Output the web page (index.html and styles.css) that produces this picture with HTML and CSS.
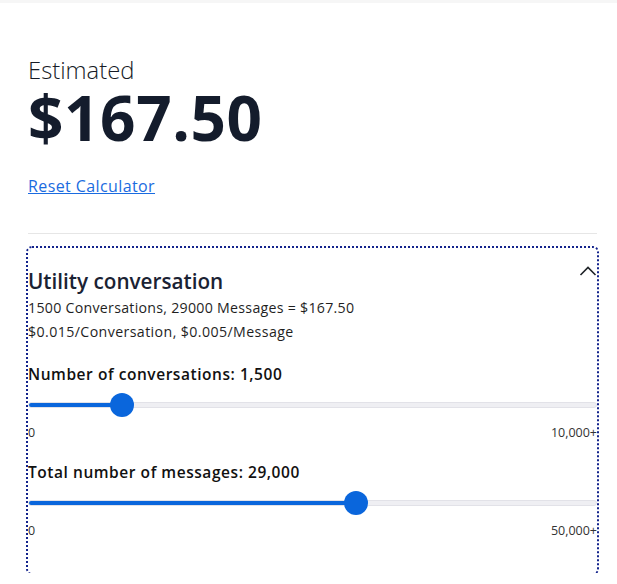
FILE: index.html
```html
<!DOCTYPE html>
<html lang="en">
<head>
<meta charset="utf-8">
<title>Estimate</title>
<link rel="stylesheet" href="styles.css">
</head>
<body>
<div class="topbar"></div>
<main class="page">
  <p class="estimated">Estimated</p>
  <p class="total">$167.50</p>
  <a class="reset" href="#">Reset Calculator</a>
  <hr class="divider">
  <section class="card">
    <div class="card-head">
      <h2 class="card-title">Utility conversation</h2>
      <svg class="chevron" width="18" height="12" viewBox="0 0 18 12" aria-hidden="true"><path d="M1.5 10 L9 2.5 L16.5 10" fill="none" stroke="#1f2328" stroke-width="1.6"/></svg>
    </div>
    <p class="summary">1500 Conversations, 29000 Messages = $167.50</p>
    <p class="summary">$0.015/Conversation, $0.005/Message</p>
    <div class="field">
      <label class="field-label">Number of conversations: 1,500</label>
      <input class="range" type="range" min="0" max="10000" value="1500" style="--p:0.15">
      <div class="scale"><span>0</span><span>10,000+</span></div>
    </div>
    <div class="field">
      <label class="field-label">Total number of messages: 29,000</label>
      <input class="range" type="range" min="0" max="50000" value="29000" style="--p:0.58">
      <div class="scale"><span>0</span><span>50,000+</span></div>
    </div>
  </section>
</main>
</body>
</html>
```

FILE: styles.css
```css
* { box-sizing: border-box; }
html, body { margin: 0; padding: 0; background: #ffffff; }
body {
  font-family: "Open Sans", "Noto Sans", "Liberation Sans", sans-serif;
  color: #1b1b1b;
}
.topbar { height: 3px; background: #f6f6f6; }
.page { padding: 52px 20px 0 28px; }
.estimated {
  margin: 0;
  font-size: 23.8px;
  font-weight: 300;
  line-height: 30px;
  color: #161b26;
}
.total {
  margin: 0;
  font-size: 62px;
  font-weight: 700;
  line-height: 64px;
  color: #141c2c;
  letter-spacing: 0.6px;
}
.reset {
  display: inline-block;
  margin-top: 27px;
  font-size: 16px;
  line-height: 20px;
  letter-spacing: 0.4px;
  color: #1a6be0;
  text-decoration: underline;
}
.divider {
  margin: 36px 0 14px;
  border: 0;
  border-top: 1px solid #e6e6e6;
}
.card {
  outline: 2px dotted #13238c;
  border-radius: 4px;
  padding: 20px 0 34px;
}
.card-head { display: flex; justify-content: space-between; align-items: flex-start; }
.card-title {
  margin: 0;
  font-size: 20.7px;
  font-weight: 600;
  line-height: 26px;
  color: #1a2233;
}
.chevron { margin-top: -3px; }
.summary {
  margin: 0;
  font-size: 14.2px;
  letter-spacing: 0.4px;
  line-height: 24px;
  color: #1f1f1f;
}
.summary:first-of-type { margin-top: 2px; letter-spacing: 0.27px; }
.field { margin-top: 20px; }
.field + .field { margin-top: 21px; }
.field-label {
  display: block;
  font-size: 15.5px;
  letter-spacing: 0.55px;
  font-weight: 600;
  line-height: 20px;
  color: #111111;
}
.range {
  -webkit-appearance: none;
  appearance: none;
  display: block;
  width: 100%;
  height: 26px;
  margin: 8px 0 0;
  background: transparent;
}
.range::-webkit-slider-runnable-track {
  height: 6px;
  border-radius: 3px;
  border: 1px solid #e2e2e8;
  background: linear-gradient(to right, #0a66dc calc(12px + (100% - 24px) * var(--p)), #efeff3 calc(12px + (100% - 24px) * var(--p)));
}
.range::-webkit-slider-thumb {
  -webkit-appearance: none;
  appearance: none;
  width: 24px;
  height: 24px;
  border-radius: 50%;
  background: #0a66dc;
  border: 0;
  margin-top: -10px;
}
.scale {
  display: flex;
  justify-content: space-between;
  margin-top: 7px;
  font-size: 12.5px;
  line-height: 16px;
  color: #333333;
}
```
